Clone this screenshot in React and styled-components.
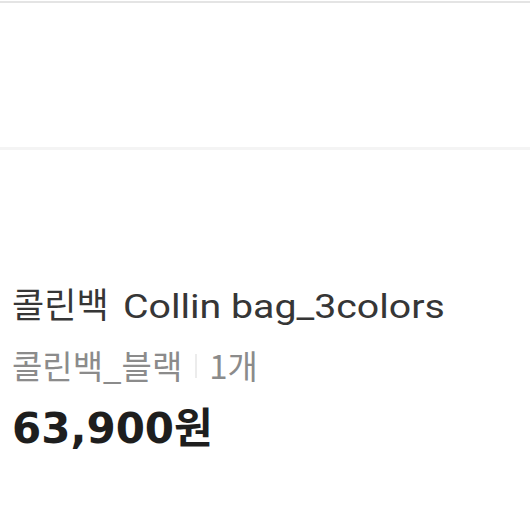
import React from 'react';
import styled, { createGlobalStyle } from 'styled-components';

const GlobalStyle = createGlobalStyle`
  html, body {
    margin: 0;
    padding: 0;
    background: #ffffff;
  }
  body {
    font-family: Roboto, "Noto Sans CJK KR", sans-serif;
    -webkit-font-smoothing: antialiased;
  }
`;

const Page = styled.div`
  width: 530px;
  height: 530px;
  overflow: hidden;
  background: #ffffff;
  display: flex;
  flex-direction: column;
`;

const TopArea = styled.div`
  margin-top: 1px;
  height: 144px;
  border-top: 2px solid #e4e4e4;
  border-bottom: 3px solid #f4f4f4;
`;

const Product = styled.section`
  padding: 133px 12px 0;
  display: flex;
  flex-direction: column;
`;

const Title = styled.h1`
  margin: 0;
  font-family: "Noto Sans CJK KR", sans-serif;
  font-size: 35px;
  line-height: 40px;
  font-weight: 400;
  color: #363636;
  white-space: nowrap;
`;

const Latin = styled.span`
  display: inline-block;
  margin-left: 7px;
  font-family: Roboto, sans-serif;
  font-size: 33px;
  transform: scaleX(${p => p.$stretch});
  transform-origin: left center;
`;

const OptionRow = styled.div`
  display: flex;
  align-items: center;
  margin-top: 18px;
  font-family: "Noto Sans CJK KR", sans-serif;
  font-size: 33px;
  line-height: 40px;
  color: #8b8b8b;
`;

const Sep = styled.span`
  width: 2px;
  height: 24px;
  background: #ececec;
  margin: 2px 12px 0 13px;
`;

const Price = styled.div`
  margin-top: 20px;
  font-family: "DejaVu Sans", "Noto Sans CJK KR", sans-serif;
  font-size: 42px;
  line-height: 48px;
  font-weight: 700;
  color: #1e1e1e;
`;

export default function App() {
  return (
    <Page>
      <GlobalStyle />
      <TopArea />
      <Product>
        <Title>
          콜린백 <Latin $stretch={1.19}>Collin bag_3colors</Latin>
        </Title>
        <OptionRow>
          <span>콜린백_블랙</span>
          <Sep />
          <span>1개</span>
        </OptionRow>
        <Price>63,900원</Price>
      </Product>
    </Page>
  );
}
